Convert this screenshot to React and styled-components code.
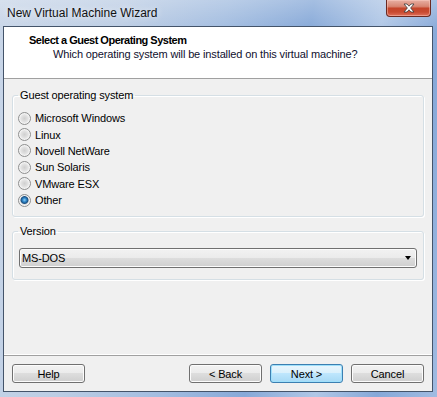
import React from 'react';
import styled, { createGlobalStyle } from 'styled-components';

const GlobalStyle = createGlobalStyle`
  html, body { margin: 0; padding: 0; }
  body {
    font-family: "Liberation Sans", Arial, sans-serif;
    font-size: 11px;
    letter-spacing: -0.13px;
    color: #000;
    background: #7ea1d1;
  }
`;

const osOptions = [
  'Microsoft Windows',
  'Linux',
  'Novell NetWare',
  'Sun Solaris',
  'VMware ESX',
  'Other',
];

const Window = styled.div`
  width: 437px;
  height: 397px;
  box-sizing: border-box;
  display: flex;
  flex-direction: column;
  padding: 0 4px 5px 3px;
  background:
    linear-gradient(180deg, rgba(255, 255, 255, 0.25) 0px, rgba(255, 255, 255, 0) 30px),
    linear-gradient(100deg, #c9d6e8 0%, #bccde4 25%, #a3bde0 45%, #87a9d8 62%, #b0c7e6 76%, #86a8d8 88%, #a0bbe1 100%);
`;

const TitleBar = styled.div`
  height: 26px;
  flex: none;
  display: flex;
  align-items: flex-start;
`;

const Caption = styled.div`
  padding: 6px 0 0 4px;
  font-size: 12px;
  line-height: 14px;
  letter-spacing: 0;
  color: #111;
  text-shadow: 0 0 6px rgba(255, 255, 255, 0.9);
`;

const CloseButton = styled.div`
  margin-left: auto;
  margin-right: 2px;
  width: 45px;
  height: 17px;
  box-sizing: border-box;
  border: 1px solid #6b2a22;
  border-top: none;
  border-radius: 0 0 4px 4px;
  display: flex;
  align-items: center;
  justify-content: center;
  background: linear-gradient(180deg, #e8b0a3 0%, #d88672 40%, #c5452a 52%, #c84a30 75%, #e0705a 100%);
  box-shadow: inset 0 0 0 1px rgba(255, 210, 200, 0.45);
`;

const Client = styled.div`
  flex: 1;
  display: flex;
  flex-direction: column;
  border: 1px solid #44546a;
  background: #f0f0f0;
`;

const Header = styled.div`
  height: 51px;
  flex: none;
  box-sizing: border-box;
  background: #fff;
  padding: 7px 0 0 25px;
`;

const HeaderRule = styled.div`
  height: 1px;
  flex: none;
  background: #a0a0a0;
`;

const HeaderTitle = styled.div`
  font-weight: bold;
  line-height: 13px;
  letter-spacing: -0.5px;
`;

const HeaderSub = styled.div`
  margin-top: 1px;
  padding-left: 24px;
  line-height: 13px;
  color: #10102e;
`;

const Body = styled.div`
  flex: 1;
  padding: 10px 8px 0;
  display: flex;
  flex-direction: column;
  gap: 8px;
  border-bottom: 1px solid #fff;
`;

const GroupBox = styled.fieldset`
  margin: 0;
  padding: ${(p) => p.$pad};
  border: 1px solid #d5dfe5;
  border-radius: 3px;
  box-shadow: inset 1px 1px 0 #fff, 1px 1px 0 #fff;
  min-width: 0;
`;

const Legend = styled.legend`
  padding: 0 2px;
  line-height: 12px;
  color: #000;
`;

const RadioRow = styled.label`
  display: flex;
  align-items: center;
  gap: 4px;
  height: 16.4px;
`;

const RadioDot = styled.span`
  width: 13px;
  height: 13px;
  box-sizing: border-box;
  border-radius: 50%;
  border: 1px solid #8e8f8f;
  flex: none;
  background: ${(p) =>
    p.$checked
      ? 'radial-gradient(circle at 50% 45%, #8fd0f5 0px, #2c83c6 2px, #1b4f80 3.5px, #dcdcdc 4.5px, #f4f4f4 6px)'
      : 'radial-gradient(circle at 50% 50%, #cfcfcf 0px, #e0e0e0 3px, #f4f4f4 6px)'};
  box-shadow: inset 0 0 0 1px #f4f4f4;
`;

const Combo = styled.div`
  margin: 0 1px;
  height: 20px;
  box-sizing: border-box;
  border: 1px solid #707070;
  border-radius: 3px;
  display: flex;
  align-items: center;
  padding: 0 5px 0 2px;
  background: linear-gradient(180deg, #f2f2f2 0%, #ebebeb 49%, #dddddd 50%, #cfcfcf 100%);
  box-shadow: inset 0 0 0 1px #fcfcfc;
`;

const ComboValue = styled.span`
  flex: 1;
`;

const ComboArrow = styled.span`
  width: 0;
  height: 0;
  border-left: 3.5px solid transparent;
  border-right: 3.5px solid transparent;
  border-top: 4px solid #000;
`;

const Footer = styled.div`
  flex: none;
  display: flex;
  gap: 8px;
  padding: 8px;
  border-top: 1px solid #a0a0a0;
`;

const Spacer = styled.div`
  flex: 1;
`;

const Button = styled.button`
  width: 73px;
  height: 19px;
  padding: 0;
  font-family: inherit;
  font-size: 11px;
  letter-spacing: inherit;
  color: #000;
  border-radius: 3px;
  border: 1px solid ${(p) => (p.$default ? '#3c7fb1' : '#707070')};
  background: ${(p) =>
    p.$default
      ? 'linear-gradient(180deg, #eaf6fd 0%, #d9f0fc 49%, #bee6fd 50%, #a7d9f5 100%)'
      : 'linear-gradient(180deg, #f2f2f2 0%, #ebebeb 49%, #dddddd 50%, #cfcfcf 100%)'};
  box-shadow: inset 0 0 0 1px ${(p) => (p.$default ? '#9fe0fb' : '#fcfcfc')};
`;

export default function App() {
  const selected = 'Other';
  return (
    <>
      <GlobalStyle />
      <Window>
        <TitleBar>
          <Caption>New Virtual Machine Wizard</Caption>
          <CloseButton>
            <svg width="12" height="10" viewBox="0 0 12 10">
              <path
                d="M1 1 H4 L6 3.2 L8 1 H11 L7.6 5 L11 9 H8 L6 6.8 L4 9 H1 L4.4 5 Z"
                fill="#fff"
                stroke="#3a3a3a"
                strokeWidth="0.8"
              />
            </svg>
          </CloseButton>
        </TitleBar>
        <Client>
          <Header>
            <HeaderTitle>Select a Guest Operating System</HeaderTitle>
            <HeaderSub>Which operating system will be installed on this virtual machine?</HeaderSub>
          </Header>
          <HeaderRule />
          <Body>
            <GroupBox $pad="9px 5px 8px">
              <Legend>Guest operating system</Legend>
              {osOptions.map((os) => (
                <RadioRow key={os}>
                  <RadioDot $checked={os === selected} />
                  {os}
                </RadioRow>
              ))}
            </GroupBox>
            <GroupBox $pad="11px 5px 11px">
              <Legend>Version</Legend>
              <Combo>
                <ComboValue>MS-DOS</ComboValue>
                <ComboArrow />
              </Combo>
            </GroupBox>
          </Body>
          <Footer>
            <Button>Help</Button>
            <Spacer />
            <Button>&lt; Back</Button>
            <Button $default>Next &gt;</Button>
            <Button>Cancel</Button>
          </Footer>
        </Client>
      </Window>
    </>
  );
}
